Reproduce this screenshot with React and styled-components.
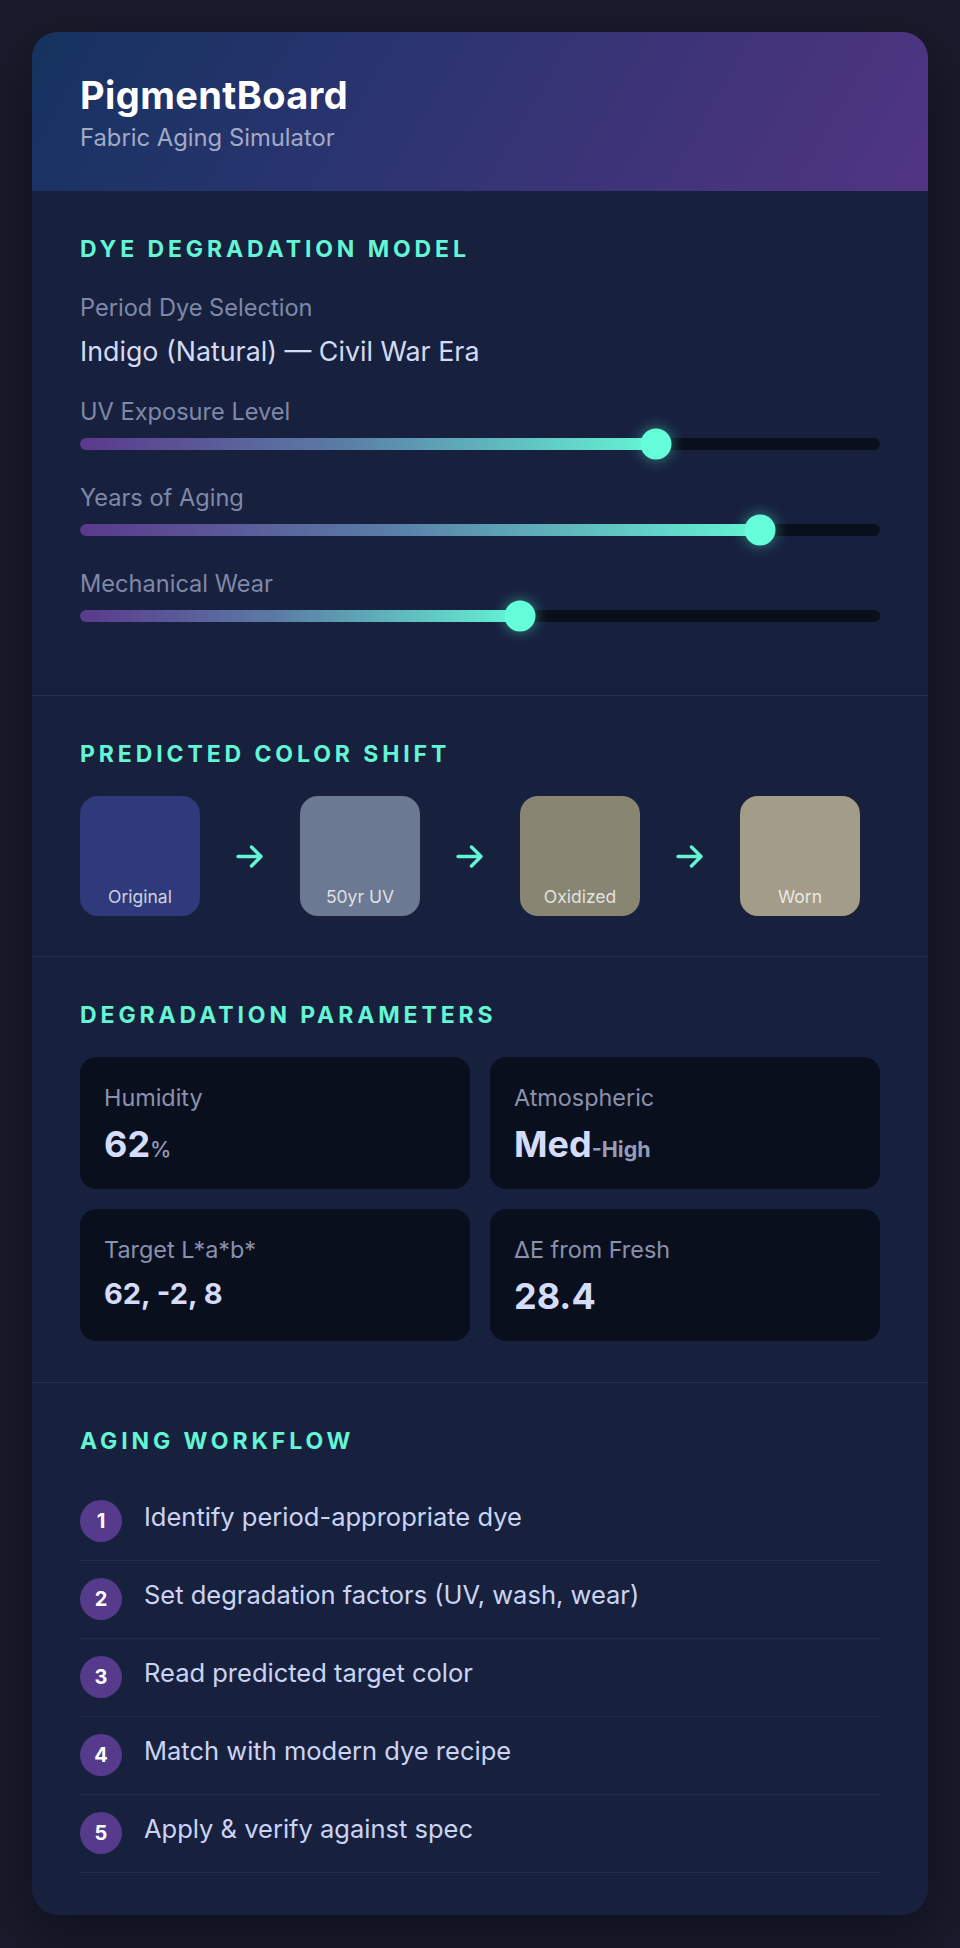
import React from "react";
import styled, { createGlobalStyle } from "styled-components";

const sliders = [
  { label: "UV Exposure Level", value: 72 },
  { label: "Years of Aging", value: 85 },
  { label: "Mechanical Wear", value: 55 },
];

const swatches = [
  { label: "Original", color: "#2e3a7c" },
  { label: "50yr UV", color: "#6c7993" },
  { label: "Oxidized", color: "#888573" },
  { label: "Worn", color: "#a39c88" },
];

const steps = [
  "Identify period-appropriate dye",
  "Set degradation factors (UV, wash, wear)",
  "Read predicted target color",
  "Match with modern dye recipe",
  "Apply & verify against spec",
];

const Arrow = () => (
  <ArrowIcon viewBox="0 0 28 23" fill="none">
    <path
      d="M2 11.5h23M15.5 2l9.5 9.5-9.5 9.5"
      stroke="#64f5d4"
      strokeWidth="3.4"
      strokeLinecap="round"
      strokeLinejoin="round"
    />
  </ArrowIcon>
);

const App = () => {
  return (
    <>
      <GlobalStyle />
      <Page>
        <Board>
          <Header>
            <Title>PigmentBoard</Title>
            <Subtitle>Fabric Aging Simulator</Subtitle>
          </Header>

          <Section $pb={42}>
            <Heading>Dye Degradation Model</Heading>
            <Field $mb={29}>
              <Label $gap={12}>Period Dye Selection</Label>
              <DyeName>Indigo (Natural) — Civil War Era</DyeName>
            </Field>
            {sliders.map((s) => (
              <Field key={s.label} $mb={31}>
                <Label $gap={10}>{s.label}</Label>
                <Track>
                  <Fill $value={s.value} />
                  <Thumb $value={s.value} />
                </Track>
              </Field>
            ))}
          </Section>

          <Section $pb={40}>
            <Heading>Predicted Color Shift</Heading>
            <SwatchRow>
              {swatches.map((s, i) => (
                <React.Fragment key={s.label}>
                  {i > 0 && <Arrow />}
                  <Swatch $color={s.color}>
                    <SwatchLabel>{s.label}</SwatchLabel>
                  </Swatch>
                </React.Fragment>
              ))}
            </SwatchRow>
          </Section>

          <Section $pb={41}>
            <Heading>Degradation Parameters</Heading>
            <StatGrid>
              <Stat>
                <StatLabel>Humidity</StatLabel>
                <StatValue>
                  62<Unit>%</Unit>
                </StatValue>
              </Stat>
              <Stat>
                <StatLabel>Atmospheric</StatLabel>
                <StatValue>
                  Med<Unit $bold>-High</Unit>
                </StatValue>
              </Stat>
              <Stat>
                <StatLabel>Target L*a*b*</StatLabel>
                <StatValue $small>62, -2, 8</StatValue>
              </Stat>
              <Stat>
                <StatLabel>ΔE from Fresh</StatLabel>
                <StatValue>28.4</StatValue>
              </Stat>
            </StatGrid>
          </Section>

          <Section $pb={42}>
            <Heading>Aging Workflow</Heading>
            <StepList>
              {steps.map((s, i) => (
                <Step key={s}>
                  <StepNum>{i + 1}</StepNum>
                  <StepText>{s}</StepText>
                </Step>
              ))}
            </StepList>
          </Section>
        </Board>
      </Page>
    </>
  );
};

export default App;

const GlobalStyle = createGlobalStyle`
  * { box-sizing: border-box; }
  body {
    margin: 0;
    background: #191a2b;
    font-family: Inter, "Noto Sans", sans-serif;
  }
`;

const Page = styled.div`
  padding: 32px;
  min-height: 1948px;
  background: #191a2b;
`;

const Board = styled.div`
  width: 896px;
  background: #17213e;
  border-radius: 26px;
  overflow: hidden;
  box-shadow: 0 20px 60px rgba(0, 0, 0, 0.35);
`;

const Header = styled.div`
  padding: 40px 48px 40px;
  background: linear-gradient(120deg, #15335f 0%, #2b3471 40%, #3f3479 70%, #513583 100%);
`;

const Title = styled.h1`
  margin: 0;
  font-size: 38px;
  line-height: 46px;
  font-weight: 700;
  letter-spacing: 0.4px;
  color: #ffffff;
`;

const Subtitle = styled.p`
  margin: 6px 0 0;
  font-size: 23.8px;
  line-height: 27px;
  color: #a3aac6;
`;

const Section = styled.div`
  padding: 44px 48px ${(p) => p.$pb}px;
  & + & {
    border-top: 1px solid #243050;
  }
`;

const Heading = styled.h2`
  margin: 0 0 28px;
  font-size: 23px;
  line-height: 28px;
  font-weight: 700;
  letter-spacing: 3.9px;
  text-transform: uppercase;
  color: #64f5d4;
`;

const Field = styled.div`
  margin-bottom: ${(p) => p.$mb}px;
`;

const Label = styled.div`
  margin-bottom: ${(p) => p.$gap}px;
  font-size: 23.6px;
  line-height: 33px;
  color: #7f88a8;
`;

const DyeName = styled.div`
  font-size: 26.8px;
  line-height: 30px;
  color: #d3dbf6;
`;

const Track = styled.div`
  position: relative;
  height: 12px;
  border-radius: 6px;
  background: #0a0f1c;
`;

const Fill = styled.div`
  height: 100%;
  width: ${(p) => p.$value}%;
  border-radius: 6px;
  background: linear-gradient(90deg, #5b398c 0%, #5a7ca6 45%, #64f5d4 100%);
`;

const Thumb = styled.div`
  position: absolute;
  top: 50%;
  left: ${(p) => p.$value}%;
  width: 31px;
  height: 31px;
  border-radius: 50%;
  background: #64ffda;
  transform: translate(-50%, -50%);
  box-shadow: 0 0 14px rgba(100, 255, 218, 0.45);
`;

const SwatchRow = styled.div`
  display: flex;
  align-items: center;
  gap: 36px;
`;

const ArrowIcon = styled.svg`
  width: 28px;
  height: 23px;
  flex-shrink: 0;
`;

const Swatch = styled.div`
  width: 120px;
  height: 120px;
  border-radius: 18px;
  background: ${(p) => p.$color};
  display: flex;
  align-items: flex-end;
  justify-content: center;
  padding-bottom: 9px;
`;

const SwatchLabel = styled.span`
  font-size: 17.5px;
  line-height: 21px;
  color: rgba(255, 255, 255, 0.78);
`;

const StatGrid = styled.div`
  display: grid;
  grid-template-columns: 1fr 1fr;
  gap: 20px;
`;

const Stat = styled.div`
  background: #0a0f1e;
  border-radius: 16px;
  padding: 24px;
  height: 132px;
`;

const StatLabel = styled.div`
  margin-bottom: 10px;
  font-size: 23.4px;
  line-height: 33px;
  color: #8a91ad;
`;

const StatValue = styled.div`
  font-size: ${(p) => (p.$small ? 29 : 36)}px;
  line-height: ${(p) => (p.$small ? 35 : 41)}px;
  font-weight: 700;
  color: #d4dcfa;
`;

const Unit = styled.span`
  font-size: 21.5px;
  font-weight: ${(p) => (p.$bold ? 700 : 500)};
  color: #959cb9;
`;

const StepList = styled.div`
  display: flex;
  flex-direction: column;
`;

const Step = styled.div`
  display: flex;
  align-items: center;
  gap: 22px;
  padding: 17px 0 18px;
  border-bottom: 1px solid #222c4a;
`;

const StepNum = styled.div`
  width: 42px;
  height: 42px;
  flex-shrink: 0;
  border-radius: 50%;
  background: #563a8b;
  color: #ffffff;
  font-size: 20px;
  font-weight: 700;
  display: flex;
  align-items: center;
  justify-content: center;
`;

const StepText = styled.div`
  margin-top: -8px;
  font-size: 25.5px;
  line-height: 30px;
  color: #cbd4f3;
`;
